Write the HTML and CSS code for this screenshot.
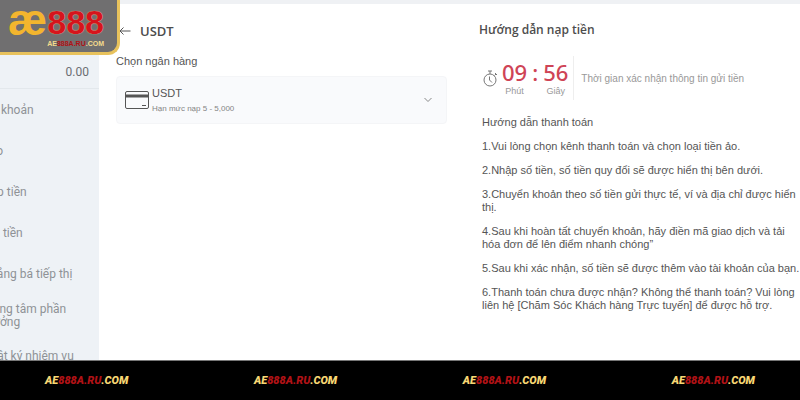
FILE: index.html
```html
<!DOCTYPE html>
<html lang="vi">
<head>
    <meta charset="UTF-8">
    <meta name="viewport" content="width=device-width, initial-scale=1.0">
    <title>Nạp tiền USDT</title>
    <link rel="stylesheet" href="styles.css">
</head>
<body>
    <div class="logo">
        <div class="logo-main"><span class="gold">æ</span><span class="red">888</span></div>
        <div class="logo-site">AE<span class="red">888A.RU</span>.COM</div>
    </div>

    <div class="layout">
        <aside class="sidebar">
            <div class="balance">0.00</div>
            <ul class="menu">
                <li>Tài khoản</li>
                <li>Kho</li>
                <li>Nạp tiền</li>
                <li>Rút tiền</li>
                <li>Quảng bá tiếp thị</li>
                <li>Trung tâm phần thưởng</li>
                <li>Nhật ký nhiệm vụ</li>
            </ul>
        </aside>

        <main class="content">
            <section class="payment">
                <header class="payment-header">
                    <button class="back" aria-label="Quay lại">
                        <svg width="12" height="12" viewBox="0 0 12 12"><path d="M11.5 6H1M4.5 2.5L1 6l3.500 3.500"/></svg>
                    </button>
                    <h1>USDT</h1>
                </header>
                <label class="bank-label" for="bank">Chọn ngân hàng</label>
                <div class="bank">
                    <svg class="card-icon" width="24" height="20" viewBox="0 0 24 20">
                        <rect x="0.500" y="1.500" width="23" height="17" rx="1.500"/>
                        <path class="card-strip" d="M1 6h22"/>
                        <path d="M17 15.500h4"/>
                    </svg>
                    <div class="bank-text">
                        <select id="bank">
                            <option>USDT</option>
                        </select>
                        <small>Hạn mức nạp 5 - 5,000</small>
                    </div>
                    <svg class="chevron" width="8" height="6" viewBox="0 0 8 6"><path d="M0.500 1L4 4.500 7.500 1"/></svg>
                </div>
            </section>

            <section class="guide">
                <h2>Hướng dẫn nạp tiền</h2>
                <div class="timer">
                    <svg class="clock" width="14" height="17" viewBox="0 0 14 17">
                        <circle cx="7" cy="10" r="6"/>
                        <path d="M7 4V1M5 1h4M11.500 5.500l1.500-1.500M12 3l2 2M6.500 6.500V10l2.500 2.500"/>
                    </svg>
                    <div class="unit"><b>09</b><span>Phút</span></div>
                    <div class="unit"><b>:</b></div>
                    <div class="unit"><b>56</b><span>Giây</span></div>
                    <p class="timer-note">Thời gian xác nhận thông tin gửi tiền</p>
                </div>
                <div class="steps">
                    <p>Hướng dẫn thanh toán</p>
                    <p>1.Vui lòng chọn kênh thanh toán và chọn loại tiền ảo.</p>
                    <p>2.Nhập số tiền, số tiền quy đổi sẽ được hiển thị bên dưới.</p>
                    <p>3.Chuyển khoản theo số tiền gửi thực tế, ví và địa chỉ được hiển thị.</p>
                    <p>4.Sau khi hoàn tất chuyển khoản, hãy điền mã giao dịch và tải hóa đơn để lên điểm nhanh chóng”</p>
                    <p>5.Sau khi xác nhận, số tiền sẽ được thêm vào tài khoản của bạn.</p>
                    <p>6.Thanh toán chưa được nhận? Không thể thanh toán? Vui lòng liên hệ [Chăm Sóc Khách hàng Trực tuyến] để được hỗ trợ.</p>
                </div>
            </section>
        </main>
    </div>

    <footer class="footer">
        <span>AE<span class="red">888A.RU</span>.COM</span>
        <span>AE<span class="red">888A.RU</span>.COM</span>
        <span>AE<span class="red">888A.RU</span>.COM</span>
        <span>AE<span class="red">888A.RU</span>.COM</span>
    </footer>
</body>
</html>
```
FILE: styles.css
```css
* {
    box-sizing: border-box;
}
body {
    margin: 0;
    height: 100vh;
    display: flex;
    flex-direction: column;
    overflow: hidden;
    font-family: "Liberation Sans", Arial, sans-serif;
    font-size: 12px;
    color: #555;
    background: #fff;
}
h1, h2, p, ul {
    margin: 0;
    padding: 0;
}
svg {
    fill: none;
    stroke: #555;
    flex: none;
}

/* logo over the page corner */
.logo {
    position: absolute;
    top: 0;
    left: 0;
    width: 120px;
    height: 55px;
    padding: 4px 13px 0 8px;
    background: #706f70;
    border: solid #e8c25c;
    border-width: 0 3px 3px 0;
    border-bottom-right-radius: 12px;
    font-weight: bold;
    text-align: right;
}
.logo-main {
    display: flex;
    justify-content: space-between;
    height: 35px;
    font-size: 34px;
    line-height: 36px;
}
.logo-main .red {
    color: #d6141c;
    text-shadow: 0 0 1px #fbd9a0;
}
.gold {
    font-size: 44px;
    line-height: 32px;
    color: #f3b52e;
}
.logo-site {
    font-size: 7px;
    line-height: 10px;
    color: #f5dc8c;
}
.red {
    color: #b01216;
}

.layout {
    flex: 1;
    min-height: 0;
    display: flex;
}
.sidebar {
    flex: none;
    width: 99px;
    overflow: hidden;
    background: #eef2f6;
    font-family: Roboto, sans-serif;
    color: #8f9296;
}
.balance {
    height: 89px;
    padding: 64px 10px 0 0;
    border-bottom: 1px solid #e3e8ec;
    text-align: right;
    line-height: 16px;
    color: #6b6e72;
}
.menu {
    margin-left: -18px;
    padding: 1px 24px 0 0;
    list-style: none;
    line-height: 13px;
}
.menu li {
    display: flex;
    align-items: center;
    height: 41px;
}

.content {
    flex: 1;
    min-width: 0;
    display: grid;
    grid-template-columns: 33fr 32fr;
    gap: 32px;
    padding: 17px 0 0 17px;
    border-top: 4px solid #eff1f4;
}
.payment-header {
    display: flex;
    align-items: center;
    gap: 9px;
    padding-left: 3px;
    height: 20px;
}
.back {
    display: flex;
    padding: 0;
    border: 0;
    background: none;
}
h1, h2 {
    font-family: "Open Sans", "Noto Sans", sans-serif;
    font-size: 12px;
    line-height: 18px;
    font-weight: 600;
    color: #4d4d4d;
}
.bank-label {
    display: block;
    margin: 12px 0 7px;
    font-size: 11px;
    line-height: 16px;
}
.bank {
    display: flex;
    align-items: center;
    gap: 3px;
    height: 48px;
    padding: 0 14px 0 8px;
    border: 1px solid #f4f5f7;
    border-radius: 4px;
    background: #f9fafc;
}
.card-strip {
    stroke-width: 3;
}
.bank-text {
    flex: 1;
    display: flex;
    flex-direction: column;
    gap: 3px;
}
select {
    appearance: none;
    padding: 0;
    border: 0;
    background: none;
    font: inherit;
    font-size: 11px;
    line-height: 13px;
    color: #555;
}
small {
    font-size: 8px;
    line-height: 11px;
    color: #858585;
}
.chevron {
    stroke: #888;
}

h1 {
    font-size: 13px;
}
.timer {
    display: flex;
    align-items: center;
    gap: 5px;
    height: 44px;
    margin: 17px 0 16px;
    padding-left: 4px;
}
.clock {
    stroke: #777;
}
.unit {
    display: flex;
    flex-direction: column;
    align-items: center;
    height: 38px;
}
.unit b {
    font-family: "Noto Sans", "Open Sans", sans-serif;
    font-size: 22px;
    line-height: 26px;
    font-weight: 500;
    color: #cf4456;
}
.unit span {
    font-size: 9px;
    line-height: 12px;
    color: #999;
}
.timer-note {
    align-self: stretch;
    display: flex;
    align-items: center;
    padding-left: 7px;
    border-left: 1px solid #eee;
    font-size: 10px;
    color: #999;
}
.steps {
    display: flex;
    flex-direction: column;
    gap: 11px;
    padding-left: 3px;
    font-size: 11px;
    line-height: 13px;
}

.footer {
    flex: none;
    display: flex;
    justify-content: space-between;
    align-items: center;
    height: 40px;
    padding: 0 45px;
    border-top: 1px solid #777;
    background: #000;
    font-family: Roboto, sans-serif;
    font-size: 11px;
    font-weight: 900;
    font-style: italic;
    color: #f8d774;
}
```
